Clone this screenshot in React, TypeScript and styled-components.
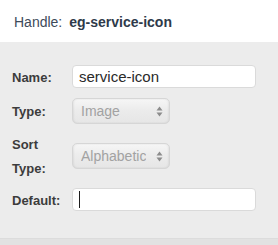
import React from 'react';
import styled, { createGlobalStyle } from 'styled-components';

const GlobalStyle = createGlobalStyle`
  html, body {
    margin: 0;
    padding: 0;
    background: #ececec;
    font-family: 'Liberation Sans', Arial, Helvetica, sans-serif;
  }
`;

const Panel = styled.div`
  width: 278px;
  height: 245px;
  display: flex;
  flex-direction: column;
  background: #ececec;
  overflow: hidden;
`;

const Header = styled.div`
  height: 42px;
  flex-shrink: 0;
  display: flex;
  align-items: center;
  padding: 1px 0 0 14px;
  box-sizing: border-box;
  background: #ffffff;
  font-size: 14px;
  color: #3e4a5a;
`;

const HandleValue = styled.span`
  margin-left: 7px;
  font-weight: bold;
  color: #2e3a4a;
`;

const Form = styled.div`
  flex: 1;
  display: grid;
  grid-template-columns: 60px 184px;
  grid-template-rows: 27px 26px 48px 23px;
  row-gap: 8px;
  align-items: center;
  padding: 21px 0 0 12px;
`;

const Label = styled.div`
  font-size: 13px;
  font-weight: bold;
  color: #3c3c3c;
  line-height: 24px;
  padding-top: 2px;
`;

const TextField = styled.div`
  height: 23px;
  box-sizing: border-box;
  display: flex;
  align-items: center;
  padding: 0 6px;
  background: #ffffff;
  border: 1px solid #dadada;
  border-radius: 4px;
  font-size: 15px;
  color: #2a2a2a;
`;

const Caret = styled.span`
  width: 1px;
  height: 17px;
  background: #1e1e1e;
`;

const Select = styled.div`
  width: 98px;
  height: 26px;
  box-sizing: border-box;
  display: flex;
  align-items: center;
  justify-content: space-between;
  padding: 0 6px 0 8px;
  background: linear-gradient(#f6f6f6, #ececec 45%, #e6e6e6);
  border: 1px solid #d6d6d6;
  border-radius: 5px;
  box-shadow: inset 1px 0 2px rgba(0, 0, 0, 0.06), inset -1px 0 2px rgba(0, 0, 0, 0.06);
  font-size: 14px;
  color: #a2a2a2;
  overflow: hidden;
`;

const SelectText = styled.span`
  white-space: nowrap;
  overflow: hidden;
`;

const Footer = styled.div`
  height: 6px;
  flex-shrink: 0;
  background: #e2e2e2;
  border-top: 1px solid #dcdcdc;
`;

const Arrows = () => (
  <svg width="7" height="11" viewBox="0 0 7 11" style={{ flexShrink: 0 }}>
    <path d="M3.5 0.5 L6.5 4.5 L0.5 4.5 Z" fill="#8c8c8c" />
    <path d="M3.5 10.5 L6.5 6.5 L0.5 6.5 Z" fill="#8c8c8c" />
  </svg>
);

const App = () => {
  return (
    <Panel>
      <GlobalStyle />
      <Header>
        Handle:
        <HandleValue>eg-service-icon</HandleValue>
      </Header>
      <Form>
        <Label>Name:</Label>
        <TextField>service-icon</TextField>

        <Label>Type:</Label>
        <Select>
          <SelectText>Image</SelectText>
          <Arrows />
        </Select>

        <Label>
          Sort
          <br />
          Type:
        </Label>
        <Select>
          <SelectText>Alphabetic</SelectText>
          <Arrows />
        </Select>

        <Label>Default:</Label>
        <TextField>
          <Caret />
        </TextField>
      </Form>
      <Footer />
    </Panel>
  );
};

export default App;
